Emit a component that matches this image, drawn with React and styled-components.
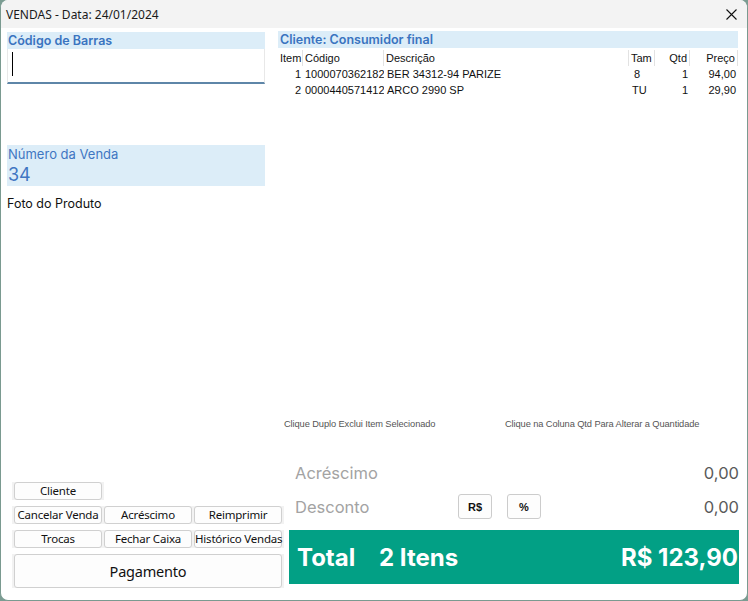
import React from "react";
import styled, { createGlobalStyle } from "styled-components";

const Global = createGlobalStyle`
  html, body { margin: 0; padding: 0; background: #7b9c92; }
  body { width: 748px; height: 601px; overflow: hidden; }
  * { box-sizing: border-box; }
`;

const Window = styled.div`
  width: 748px;
  height: 601px;
  background: #ffffff;
  border: 1px solid #7a9a90;
  border-top: none;
  border-radius: 8px 8px 8px 8px;
  overflow: hidden;
  display: flex;
  flex-direction: column;
  font-family: "Noto Sans", "Liberation Sans", sans-serif;
`;

const TitleBar = styled.div`
  height: 28px;
  flex: none;
  background: #f3f3f3;
  display: flex;
  align-items: center;
  justify-content: space-between;
  padding: 0 8px 0 5px;
  font-size: 12px;
  color: #1a1a1a;
`;

const CloseBtn = styled.div`
  width: 16px;
  height: 16px;
  display: flex;
  align-items: center;
  justify-content: center;
`;

const Body = styled.div`
  flex: 1;
  display: flex;
  flex-direction: column;
`;

const TopSection = styled.div`
  height: 432px;
  display: grid;
  grid-template-columns: 258px 460px;
  column-gap: 13px;
  padding-left: 6px;
`;

const LeftCol = styled.div`
  display: flex;
  flex-direction: column;
  padding-top: 4px;
`;

const FieldHeader = styled.div`
  height: 17px;
  background: #dcedf8;
  color: #3a74c0;
  font-family: Inter, "Noto Sans", sans-serif;
  font-weight: 600;
  font-size: 12.5px;
  line-height: 17px;
  padding-left: ${(p) => p.$pad || 1}px;
  white-space: nowrap;
`;

const InputBox = styled.div`
  height: 35px;
  background: #fff;
  border: 1px solid #e8e8e8;
  border-top: none;
  border-bottom: 2px solid #5e86a8;
  position: relative;
`;

const Caret = styled.span`
  position: absolute;
  left: 4px;
  top: 3px;
  width: 1px;
  height: 24px;
  background: #000;
`;

const VendaBox = styled.div`
  margin-top: 61px;
  height: 41px;
  background: #dcedf8;
  padding: 1px 1px 0;
  color: #3f76c2;
  font-family: Inter, "Noto Sans", sans-serif;
  display: flex;
  flex-direction: column;
`;

const VendaLabel = styled.div`
  font-size: 13px;
  line-height: 16px;
`;

const VendaNumber = styled.div`
  margin-top: 2px;
  font-size: 18px;
  line-height: 22px;
`;

const FotoLabel = styled.div`
  margin-top: 10px;
  font-family: Inter, "Noto Sans", sans-serif;
  font-size: 12.5px;
  color: #111;
`;

const RightCol = styled.div`
  display: flex;
  flex-direction: column;
  padding-top: 3px;
`;

const Table = styled.div`
  flex: 1;
  font-family: "Liberation Sans", Arial, sans-serif;
  font-size: 11px;
  color: #111;
  margin-top: 2px;
`;

const cols = "25px 81px 245px 26px 35px 48px";

const Row = styled.div`
  display: grid;
  grid-template-columns: ${cols};
  height: 16px;
  align-items: center;
`;

const HeadCell = styled.div`
  height: 16px;
  line-height: 16px;
  border-right: 1px solid #e2e2e2;
  padding: 0 2px;
  text-align: ${(p) => p.$align || "left"};
  white-space: nowrap;
  overflow: hidden;
`;

const Cell = styled.div`
  padding: 0 2px 0 ${(p) => p.$pl ?? 2}px;
  text-align: ${(p) => p.$align || "left"};
  white-space: nowrap;
  overflow: hidden;
`;

const Hints = styled.div`
  height: 12px;
  margin-bottom: 30px;
  display: grid;
  grid-template-columns: 221px 1fr;
  padding-left: 6px;
  font-family: "Liberation Sans", Arial, sans-serif;
  font-size: 9.3px;
  line-height: 12px;
  color: #555;
  letter-spacing: -0.1px;
`;

const BottomSection = styled.div`
  flex: 1;
  display: grid;
  grid-template-columns: 272px 450px;
  column-gap: 5px;
  padding-left: 11px;
`;

const ButtonsPanel = styled.div`
  padding-top: 22px;
  display: flex;
  flex-direction: column;
  gap: 6px;
`;

const ButtonRow = styled.div`
  display: flex;
  gap: 2px;
  padding: 0 2px;
  background: #f2f2f2;
  align-self: flex-start;
`;

const Btn = styled.button`
  width: ${(p) => p.$w || 88}px;
  height: ${(p) => p.$h || 18}px;
  padding: 0;
  background: #fdfdfd;
  border: 1px solid #d0d0d0;
  border-radius: 3px;
  font-family: "Noto Sans", "Liberation Sans", sans-serif;
  font-size: ${(p) => p.$fs || 11.5}px;
  color: #111;
  line-height: 1;
  white-space: nowrap;
  letter-spacing: -0.2px;
`;

const Summary = styled.div`
  display: flex;
  flex-direction: column;
`;

const SumRow = styled.div`
  height: 25px;
  margin-top: ${(p) => p.$mt || 0}px;
  display: flex;
  align-items: center;
  padding: 0 0 0 6px;
  font-family: Inter, "Noto Sans", sans-serif;
  font-size: 16.5px;
`;

const SumLabel = styled.div`
  width: 163px;
  color: #a3a3a3;
`;

const SumValue = styled.div`
  margin-left: auto;
  color: #5a5a5a;
`;

const SmallBtn = styled.button`
  width: 34px;
  height: 25px;
  margin-right: ${(p) => p.$mr || 0}px;
  background: #fdfdfd;
  border: 1px solid #cccccc;
  border-radius: 3px;
  font-family: "Liberation Sans", Arial, sans-serif;
  font-weight: 700;
  font-size: 11px;
  color: #111;
  padding: 0;
`;

const TotalBar = styled.div`
  margin-top: 11px;
  height: 54px;
  background: #02a085;
  color: #fff;
  display: flex;
  align-items: center;
  padding: 0 1px 0 8px;
  font-family: Inter, "Noto Sans", sans-serif;
  font-weight: 700;
  font-size: 24px;
`;

const TotalLabel = styled.span`
  width: 82px;
`;

const TotalValue = styled.span`
  margin-left: auto;
`;

const items = [
  { item: 1, codigo: "1000070362182", desc: "BER 34312-94 PARIZE", tam: "8", qtd: 1, preco: "94,00" },
  { item: 2, codigo: "0000440571412", desc: "ARCO 2990 SP", tam: "TU", qtd: 1, preco: "29,90" },
];

export default function App() {
  return (
    <>
      <Global />
      <Window>
        <TitleBar>
          <span>VENDAS - Data: 24/01/2024</span>
          <CloseBtn>
            <svg width="11" height="11" viewBox="0 0 11 11">
              <path d="M0.5 0.5 L10.5 10.5 M10.5 0.5 L0.5 10.5" stroke="#111" strokeWidth="1.1" />
            </svg>
          </CloseBtn>
        </TitleBar>
        <Body>
          <TopSection>
            <LeftCol>
              <FieldHeader>Código de Barras</FieldHeader>
              <InputBox>
                <Caret />
              </InputBox>
              <VendaBox>
                <VendaLabel>Número da Venda</VendaLabel>
                <VendaNumber>34</VendaNumber>
              </VendaBox>
              <FotoLabel>Foto do Produto</FotoLabel>
            </LeftCol>
            <RightCol>
              <FieldHeader $pad={2}>Cliente: Consumidor final</FieldHeader>
              <Table>
                <Row>
                  <HeadCell>Item</HeadCell>
                  <HeadCell>Código</HeadCell>
                  <HeadCell>Descrição</HeadCell>
                  <HeadCell>Tam</HeadCell>
                  <HeadCell $align="right">Qtd</HeadCell>
                  <HeadCell $align="right">Preço</HeadCell>
                </Row>
                {items.map((r) => (
                  <Row key={r.item}>
                    <Cell $align="right">{r.item}</Cell>
                    <Cell>{r.codigo}</Cell>
                    <Cell $pl={3}>{r.desc}</Cell>
                    <Cell $pl={r.tam.length === 1 ? 5 : 3}>{r.tam}</Cell>
                    <Cell $align="right">{r.qtd}</Cell>
                    <Cell $align="right">{r.preco}</Cell>
                  </Row>
                ))}
              </Table>
              <Hints>
                <span>Clique Duplo Exclui Item Selecionado</span>
                <span>Clique na Coluna Qtd Para Alterar a Quantidade</span>
              </Hints>
            </RightCol>
          </TopSection>
          <BottomSection>
            <ButtonsPanel>
              <ButtonRow>
                <Btn>Cliente</Btn>
              </ButtonRow>
              <ButtonRow>
                <Btn>Cancelar Venda</Btn>
                <Btn>Acréscimo</Btn>
                <Btn>Reimprimir</Btn>
              </ButtonRow>
              <ButtonRow>
                <Btn>Trocas</Btn>
                <Btn>Fechar Caixa</Btn>
                <Btn>Histórico Vendas</Btn>
              </ButtonRow>
              <ButtonRow>
                <Btn $w={268} $h={34} $fs={14.5}>Pagamento</Btn>
              </ButtonRow>
            </ButtonsPanel>
            <Summary>
              <SumRow>
                <SumLabel>Acréscimo</SumLabel>
                <SumValue>0,00</SumValue>
              </SumRow>
              <SumRow $mt={9}>
                <SumLabel>Desconto</SumLabel>
                <SmallBtn $mr={15}>R$</SmallBtn>
                <SmallBtn>%</SmallBtn>
                <SumValue>0,00</SumValue>
              </SumRow>
              <TotalBar>
                <TotalLabel>Total</TotalLabel>
                <span>2 Itens</span>
                <TotalValue>R$ 123,90</TotalValue>
              </TotalBar>
            </Summary>
          </BottomSection>
        </Body>
      </Window>
    </>
  );
}
